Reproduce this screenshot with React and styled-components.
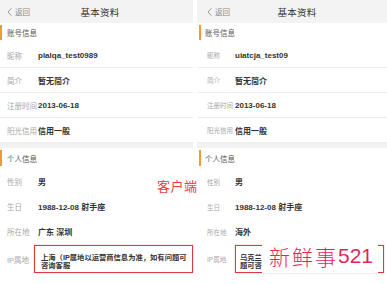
import React from "react";
import styled, { createGlobalStyle } from "styled-components";

const GlobalStyle = createGlobalStyle`
  * { box-sizing: border-box; }
  body {
    margin: 0;
    background: #fff;
    font-family: "Liberation Sans", "Noto Sans CJK SC", sans-serif;
  }
`;

const Page = styled.div`
  position: relative;
  width: 387px;
  height: 284px;
  overflow: hidden;
  display: flex;
  gap: 4px;
  background: #fff;
`;

const Panel = styled.div`
  flex: 0 0 ${p => p.$w}px;
  display: flex;
  flex-direction: column;
`;

const Header = styled.div`
  height: 23px;
  background: #f3f3f3;
  display: grid;
  grid-template-columns: 1fr auto 1fr;
  align-items: center;
  padding-left: ${p => p.$pad}px;
`;

const Back = styled.span`
  display: flex;
  align-items: center;
  gap: 3px;
  font-size: 7.5px;
  color: #8a8a8a;
`;

const Title = styled.span`
  font-size: 9.5px;
  color: #333;
  letter-spacing: 0.3px;
`;

const SectionHead = styled.div`
  height: ${p => p.$h}px;
  display: flex;
  align-items: stretch;
  padding: 2px 0 3px ${p => p.$pad}px;
  font-size: 7.5px;
  color: #555;
`;

const Bar = styled.span`
  width: 2px;
  background: #f39a2e;
  margin-right: ${p => p.$gap}px;
`;

const HeadText = styled.span`
  display: flex;
  align-items: center;
`;

const Row = styled.div`
  height: ${p => (p.$auto ? "auto" : "25px")};
  display: grid;
  grid-template-columns: ${p => p.$label}px 1fr;
  align-items: center;
  padding-left: ${p => p.$pad}px;
  padding-top: ${p => (p.$auto ? 1 : 0)}px;
  border-bottom: ${p => (p.$line ? "1px solid #efefef" : "none")};
`;

const Label = styled.span`
  font-size: ${p => p.$size}px;
  color: #a8a8a8;
  white-space: nowrap;
`;

const Value = styled.span`
  font-size: 8px;
  font-weight: 700;
  color: #333;
  white-space: nowrap;
`;

const Band = styled.div`
  height: 5px;
  background: #f2f2f2;
`;

const IpBox = styled.div`
  border: 1.5px solid #e0393b;
  box-shadow: 0 0 1px rgba(224, 57, 59, 0.6);
  padding: 8px 2px 2px ${p => p.$in}px;
  margin-right: ${p => p.$mr}px;
  font-size: 7.3px;
  line-height: 8px;
  font-weight: 700;
  color: #333;
`;

const ClientTag = styled.span`
  position: absolute;
  left: 157px;
  top: 176px;
  font-family: "Noto Sans CJK SC", sans-serif;
  font-size: 13px;
  letter-spacing: 0.5px;
  color: #e8413c;
`;

const Watermark = styled.div`
  position: absolute;
  left: 262px;
  top: 232px;
  width: 116px;
  height: 41px;
  background: #fff;
  display: flex;
  align-items: center;
  padding: 6px 0 0 7px;
  color: #e5245a;
  font-size: 21px;
  white-space: nowrap;
`;

const WmHan = styled.span`
  font-family: "Noto Sans CJK SC", sans-serif;
  font-weight: 300;
  letter-spacing: 2px;
`;

const WmNum = styled.span`
  font-family: "Liberation Sans", sans-serif;
`;

const Chevron = () => (
  <svg width="5" height="8" viewBox="0 0 5 8">
    <path d="M4.3 0.5 L1 4 L4.3 7.5" fill="none" stroke="#8a8a8a" strokeWidth="0.9" />
  </svg>
);

const Profile = ({ w, pad, barPad, barGap, labelW, labelSize, data }) => (
  <Panel $w={w}>
    <Header $pad={pad}>
      <Back>
        <Chevron />
        返回
      </Back>
      <Title>基本资料</Title>
      <span />
    </Header>
    <SectionHead $h={20} $pad={barPad}>
      <Bar $gap={barGap} />
      <HeadText>账号信息</HeadText>
    </SectionHead>
    {data.account.map(([k, v]) => (
      <Row key={k} $line $pad={pad} $label={labelW}>
        <Label $size={labelSize}>{k}</Label>
        <Value>{v}</Value>
      </Row>
    ))}
    <Band />
    <SectionHead $h={21} $pad={barPad}>
      <Bar $gap={barGap} />
      <HeadText>个人信息</HeadText>
    </SectionHead>
    {data.personal.map(([k, v]) => (
      <Row key={k} $pad={pad} $label={labelW}>
        <Label $size={labelSize}>{k}</Label>
        <Value>{v}</Value>
      </Row>
    ))}
    <Row $auto $pad={pad} $label={data.ipLabelW}>
      <Label $size={labelSize}>IP属地</Label>
      <IpBox $in={data.ipIn} $mr={data.ipMr}>{data.ip}</IpBox>
    </Row>
  </Panel>
);

const left = {
  account: [
    ["昵称", "plalqa_test0989"],
    ["简介", "暂无简介"],
    ["注册时间", "2013-06-18"],
    ["阳光信用", "信用一般"],
  ],
  personal: [
    ["性别", "男"],
    ["生日", "1988-12-08 射手座"],
    ["所在地", "广东 深圳"],
  ],
  ip: "上海（IP属地以运营商信息为准，如有问题可咨询客服",
  ipLabelW: 27,
  ipIn: 6,
  ipMr: 0,
};

const right = {
  account: [
    ["昵称", "uiatcja_test09"],
    ["简介", "暂无简介"],
    ["注册时间", "2013-06-18"],
    ["阳光信用", "信用一般"],
  ],
  personal: [
    ["性别", "男"],
    ["生日", "1988-12-08 射手座"],
    ["所在地", "海外"],
  ],
  ip: "乌克兰（IP属地以运营商信息为准，如有问题可咨询客服）",
  ipLabelW: 28,
  ipIn: 4,
  ipMr: 3,
};

export default function App() {
  return (
    <>
      <GlobalStyle />
      <Page>
        <Profile w={193} pad={7} barPad={0} barGap={5} labelW={31} labelSize={7.5} data={left} />
        <Profile w={190} pad={10} barPad={2} barGap={4} labelW={28} labelSize={6.5} data={right} />
        <ClientTag>客户端</ClientTag>
        <Watermark>
          <WmHan>新鲜事</WmHan>
          <WmNum>521</WmNum>
        </Watermark>
      </Page>
    </>
  );
}
